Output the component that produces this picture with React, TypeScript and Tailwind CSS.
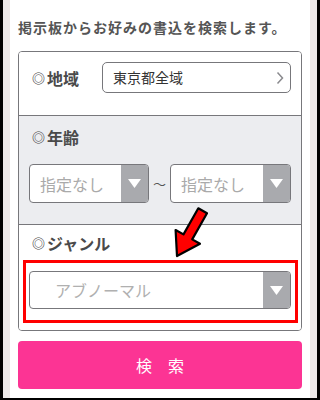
import React from 'react';

const font = { fontFamily: '"Noto Sans CJK JP", "Noto Sans", sans-serif' };

const Caret = () => (
    <div className="w-[27px] h-full bg-[#a9aaae] flex items-center justify-center shrink-0">
        <svg width="13" height="9" viewBox="0 0 13 9">
            <polygon points="0,0 13,0 6.5,9" fill="#ffffff" />
        </svg>
    </div>
);

const Label = ({ text }: { text: string }) => (
    <div className="flex items-center text-[#4a4a4a] font-bold leading-[20px]">
        <span className="text-[13px] mr-[2px]">◎</span>
        <span className="text-[16px]">{text}</span>
    </div>
);

export default function App() {
    return (
        <div className="relative w-[320px] h-[400px] bg-black pl-[3px] pr-[3px] pb-[2px]" style={font}>
            <div className="h-full bg-[#ece8e8] px-[7px]">
                <div className="h-full bg-white px-[8px]">
                    {/* Title */}
                    <div className="pt-[17px] text-[14px] leading-[20px] tracking-[1px] font-bold text-[#555555] whitespace-nowrap">
                        掲示板からお好みの書込を検索します。
                    </div>

                    {/* Search card */}
                    <div className="mt-[14px] border border-[#77777b] rounded-[4px] overflow-hidden">
                        {/* Area */}
                        <div className="flex items-center pt-[10px] pb-[22px] pl-[13px] pr-[10px] bg-white">
                            <div className="w-[70px]">
                                <Label text="地域" />
                            </div>
                            <div className="flex-1 h-[31px] border border-[#77777b] rounded-[5px] flex items-center pl-[10px] pr-[6px]">
                                <span className="flex-1 text-[14px] text-[#333333]">東京都全域</span>
                                <svg width="8" height="14" viewBox="0 0 8 14">
                                    <polyline points="1.5,1.5 6.5,7 1.5,12.5" fill="none" stroke="#8a8a8e" strokeWidth="1.5" />
                                </svg>
                            </div>
                        </div>

                        {/* Age */}
                        <div className="border-t border-[#77777b] bg-[#ecedf0] pt-[11px] pb-[21px] px-[10px]">
                            <div className="pl-[3px]">
                                <Label text="年齢" />
                            </div>
                            <div className="mt-[17px] flex items-center">
                                <div className="w-[120px] h-[39px] border border-[#77777b] rounded-[4px] overflow-hidden bg-white flex">
                                    <span className="flex-1 pl-[10px] flex items-center text-[16px] text-[#aaaaaa]">指定なし</span>
                                    <Caret />
                                </div>
                                <span className="w-[21px] text-center text-[13px] text-[#555555]">～</span>
                                <div className="flex-1 h-[39px] border border-[#77777b] rounded-[4px] overflow-hidden bg-white flex">
                                    <span className="flex-1 pl-[10px] flex items-center text-[16px] text-[#aaaaaa]">指定なし</span>
                                    <Caret />
                                </div>
                            </div>
                        </div>

                        {/* Genre */}
                        <div className="relative border-t border-[#77777b] bg-white pt-[8px] pb-[21px] px-[10px]">
                            <div className="pl-[3px]">
                                <Label text="ジャンル" />
                            </div>
                            <div className="mt-[18px] h-[38px] border border-[#77777b] rounded-[4px] overflow-hidden bg-white flex">
                                <span className="flex-1 pl-[25px] flex items-center text-[16px] text-[#b0b0b0]">アブノーマル</span>
                                <Caret />
                            </div>
                            <div className="absolute left-[4px] top-[35px] w-[275px] h-[63px] border-[3px] border-[#ff0000]" />
                        </div>
                    </div>

                    {/* Submit */}
                    <button className="mt-[10px] w-full h-[48px] rounded-[4px] bg-[#fc3494] text-white text-[16px] tracking-[1em] pl-[1em]">
                        検索
                    </button>
                </div>
            </div>

            {/* Annotation arrow */}
            <svg className="absolute left-0 top-0 pointer-events-none" width="320" height="400">
                <polygon
                    points="198.3,208.3 207,213.3 192.2,239.4 200,243.8 177,256 175.6,230 183.5,234.4"
                    fill="#ff0000"
                    stroke="#000000"
                    strokeWidth="2.2"
                    strokeLinejoin="round"
                />
            </svg>
        </div>
    );
}
